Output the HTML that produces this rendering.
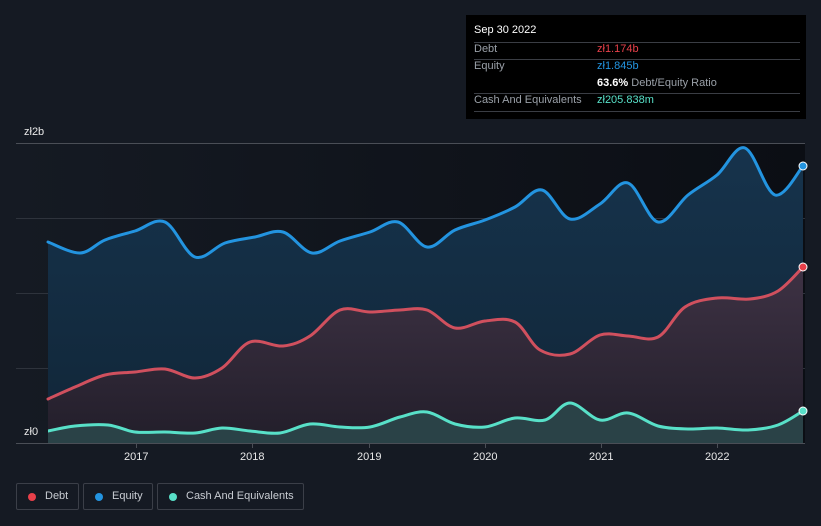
<!DOCTYPE html>
<html><head><meta charset="utf-8"><style>
html,body{margin:0;width:821px;height:526px;overflow:hidden}
body{background:#151a23;font-family:"Liberation Sans",sans-serif;position:relative}
.tt{position:absolute;left:466px;top:15px;width:340px;height:104px;background:#000;color:#fff;font-size:11px}
.tt .r{position:absolute;left:8px;width:326px;border-top:1px solid #3a3d44}
.lb{position:absolute;color:#9aa0a8;left:8px}
.v{position:absolute;left:131px}
.ax{position:absolute;color:#e8e8e8;font-size:11px}
.leg{position:absolute;top:483px;height:27px;border:1px solid #3b3f48;border-radius:2px;color:#c8ccd2;font-size:11px;line-height:25px;box-sizing:border-box;white-space:nowrap}
.leg i{position:absolute;left:11px;top:9px;width:8px;height:8px;border-radius:50%}
</style></head><body>
<svg id="s" width="821" height="526" style="position:absolute;left:0;top:0">
<defs><linearGradient id="bg" x1="0" x2="1"><stop offset="0" stop-color="#151a23"/><stop offset="1" stop-color="#0b0e14"/></linearGradient>
<linearGradient id="eq" x1="0" y1="0" x2="0" y2="1"><stop offset="0" stop-color="#16334c"/><stop offset="1" stop-color="#112638"/></linearGradient>
<linearGradient id="db" x1="0" y1="0" x2="0" y2="1"><stop offset="0" stop-color="#3e3244"/><stop offset="1" stop-color="#221e2a"/></linearGradient></defs>
<rect x="16" y="143" width="789" height="300" fill="url(#bg)"/>
<g stroke="#2e333c" stroke-width="1"><line x1="16" y1="143.5" x2="805" y2="143.5" stroke="#4a4e56"/><line x1="16" y1="218.5" x2="805" y2="218.5"/><line x1="16" y1="293.5" x2="805" y2="293.5"/><line x1="16" y1="368.5" x2="805" y2="368.5"/><line x1="16" y1="443.5" x2="805" y2="443.5" stroke="#4a4e56"/></g>
<g stroke="#4a4e56"><line x1="136.5" y1="443" x2="136.5" y2="448"/><line x1="252.5" y1="443" x2="252.5" y2="448"/><line x1="369.5" y1="443" x2="369.5" y2="448"/><line x1="485.5" y1="443" x2="485.5" y2="448"/><line x1="601.5" y1="443" x2="601.5" y2="448"/><line x1="717.5" y1="443" x2="717.5" y2="448"/></g>
<path id="fe" fill="url(#eq)"/><path id="fd" fill="url(#db)"/><path id="fc" fill="#2a4247"/>
<g fill="none" stroke-width="3" stroke-linejoin="round" stroke-linecap="round">
<path id="le" stroke="#2394e0"/><path id="ld" stroke="#d0505e"/><path id="lc" stroke="#58e0c8"/>
</g>
<circle cx="803" cy="166" r="4" fill="#2394e0" stroke="#fff" stroke-width="1"/>
<circle cx="803" cy="267" r="4" fill="#e8404a" stroke="#fff" stroke-width="1"/>
<circle cx="803" cy="411" r="4" fill="#58e0c8" stroke="#fff" stroke-width="1"/>
<rect x="16" y="421" width="32" height="20" fill="#151a23"/>
</svg>
<script>
function sm(p){var d="M"+p[0][0]+","+p[0][1];for(var i=0;i<p.length-1;i++){var a=p[i-1]||p[i],b=p[i],c=p[i+1],e=p[i+2]||c;var t=6;d+=" C"+(b[0]+(c[0]-a[0])/t)+","+(b[1]+(c[1]-a[1])/t)+" "+(c[0]-(e[0]-b[0])/t)+","+(c[1]-(e[1]-b[1])/t)+" "+c[0]+","+c[1];}return d;}
function P(s){return s.trim().split(/\s+/).map(function(x){return x.split(",").map(Number)});}
var E=P("48,242 80,253 105,240 135,231 165,222 195,257 225,243 255,237 283,232 312,253 340,241 370,232 398,222 427,247 455,230 485,220 515,207 542,190 570,219 600,204 628,183 658,222 688,195 717,175 745,148 775,195 803,166");
var D=P("48,399 75,387 105,375 135,372 165,369 195,378 222,368 250,342 283,346 310,336 340,310 370,312 400,310 427,310 455,328 485,321 515,322 540,350 570,354 600,335 628,336 658,337 685,307 717,298 750,299 778,291 803,267");
var C=P("48,431 75,426 108,425 135,432 165,432 195,433 222,428 250,431 280,433 310,424 340,427 370,427 400,417 427,412 455,424 485,427 515,418 545,420 570,403 600,420 628,413 658,426 688,429 717,428 748,430 778,425 803,411");
[[E,"e"],[D,"d"],[C,"c"]].forEach(function(q){var s=sm(q[0]);document.getElementById("l"+q[1]).setAttribute("d",s);document.getElementById("f"+q[1]).setAttribute("d",s+" L803,443 L48,443 Z");});
</script>
<div class="ax" style="left:24px;top:126px">zł2b</div>
<div class="ax" style="left:24px;top:426px">zł0</div>
<div class="ax" style="left:124px;top:451px">2017</div>
<div class="ax" style="left:240px;top:451px">2018</div>
<div class="ax" style="left:357px;top:451px">2019</div>
<div class="ax" style="left:473px;top:451px">2020</div>
<div class="ax" style="left:589px;top:451px">2021</div>
<div class="ax" style="left:705px;top:451px">2022</div>
<div class="tt">
<div style="position:absolute;left:8px;top:9px">Sep 30 2022</div>
<div class="r" style="top:27px"></div>
<div class="lb" style="top:28px">Debt</div><div class="v" style="top:28px;color:#e8404a">zł1.174b</div>
<div class="r" style="top:44px"></div>
<div class="lb" style="top:45px">Equity</div><div class="v" style="top:45px;color:#2394e0">zł1.845b</div>
<div class="v" style="top:62px"><b style="color:#fff">63.6%</b> <span style="color:#9aa0a8">Debt/Equity Ratio</span></div>
<div class="r" style="top:78px"></div>
<div class="lb" style="top:79px">Cash And Equivalents</div><div class="v" style="top:79px;color:#58e0c8">zł205.838m</div>
<div class="r" style="top:96px"></div>
</div>
<div class="leg" style="left:16px;width:63px"><i style="background:#e8404a"></i><span style="padding-left:28px">Debt</span></div>
<div class="leg" style="left:83px;width:70px"><i style="background:#2394e0"></i><span style="padding-left:28px">Equity</span></div>
<div class="leg" style="left:157px;width:147px"><i style="background:#58e0c8"></i><span style="padding-left:28px">Cash And Equivalents</span></div>
</body></html>
